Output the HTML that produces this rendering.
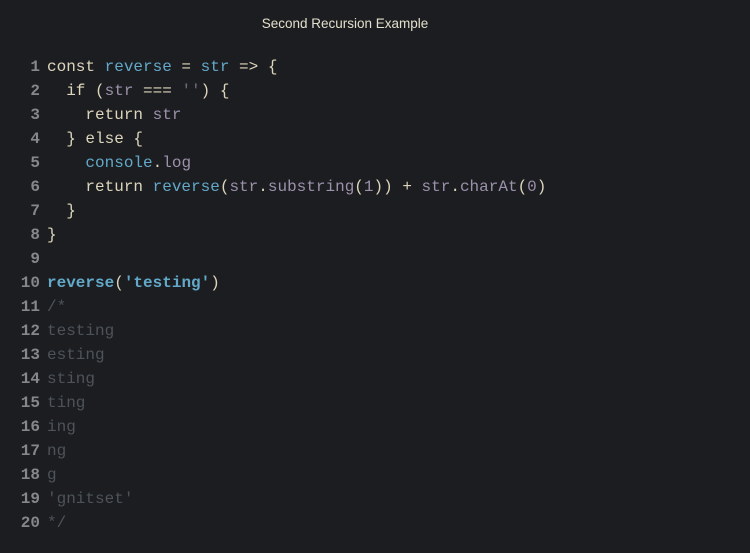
<!DOCTYPE html>
<html><head><style>
html,body{margin:0;padding:0;}
body{width:750px;height:553px;background:#1c1d20;overflow:hidden;position:relative;}
.title{position:absolute;top:16px;left:0;width:750px;text-align:center;font:13.5px "Liberation Sans",sans-serif;color:#e3dfcc;margin-left:-30px;}
.code{position:absolute;top:55px;left:0;font:16px/24px "Liberation Mono",monospace;color:#ddd5bc;white-space:pre;}
.ln{display:inline-block;width:40px;text-align:right;padding-right:7px;color:#85878a;font-weight:bold;}
.b{color:#62a9c9;}
.bb{color:#62a9c9;font-weight:bold;}
.p{color:#9c91ab;}
.c{color:#4d535a;}
.s{color:#6f6c7c;}
</style></head><body>
<div class="title">Second Recursion Example</div>
<div class="code"><div><span class="ln">1</span>const <span class="b">reverse</span> = <span class="b">str</span> =&gt; {</div><div><span class="ln">2</span>  if (<span class="p">str</span> === <span class="s">''</span>) {</div><div><span class="ln">3</span>    return <span class="p">str</span></div><div><span class="ln">4</span>  } else {</div><div><span class="ln">5</span>    <span class="b">console</span>.<span class="p">log</span></div><div><span class="ln">6</span>    return <span class="b">reverse</span>(<span class="p">str</span>.<span class="p">substring</span>(<span class="p">1</span>)) + <span class="p">str</span>.<span class="p">charAt</span>(<span class="p">0</span>)</div><div><span class="ln">7</span>  }</div><div><span class="ln">8</span>}</div><div><span class="ln">9</span></div><div><span class="ln">10</span><span class="bb">reverse</span>(<span class="bb">'testing'</span>)</div><div><span class="ln">11</span><span class="c">/*</span></div><div><span class="ln">12</span><span class="c">testing</span></div><div><span class="ln">13</span><span class="c">esting</span></div><div><span class="ln">14</span><span class="c">sting</span></div><div><span class="ln">15</span><span class="c">ting</span></div><div><span class="ln">16</span><span class="c">ing</span></div><div><span class="ln">17</span><span class="c">ng</span></div><div><span class="ln">18</span><span class="c">g</span></div><div><span class="ln">19</span><span class="c">'gnitset'</span></div><div><span class="ln">20</span><span class="c">*/</span></div></div>
</body></html>
